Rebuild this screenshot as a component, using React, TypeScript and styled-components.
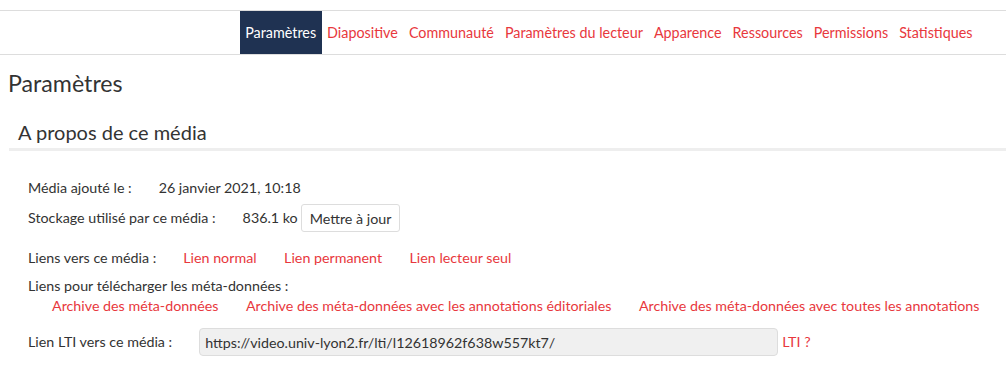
import React from "react";
import styled, { createGlobalStyle } from "styled-components";

const Global = createGlobalStyle`
  html, body { margin: 0; padding: 0; background: #fff; }
  body {
    font-family: Lato, "Open Sans", Arial, sans-serif;
    font-size: 14.27px;
    color: #333;
    width: 1006px;
    overflow: hidden;
  }
`;

const RED = "#e8383d";

const Header = styled.header`
  margin-top: 10px;
  border-top: 1px solid #ddd;
  border-bottom: 1px solid #ddd;
  display: flex;
  justify-content: flex-end;
  padding-right: 28px;
`;

const NavItem = styled.a<{ $active?: boolean }>`
  display: flex;
  align-items: center;
  height: 43px;
  padding: 0 5.5px;
  font-size: 14.35px;
  text-decoration: none;
  cursor: pointer;
  color: ${(p) => (p.$active ? "#fff" : RED)};
  background: ${(p) => (p.$active ? "#1f3252" : "transparent")};
`;

const Page = styled.main`
  padding: 0 0 0 8px;
`;

const Title = styled.h1`
  margin: 15px 0 0 0;
  font-size: 23.2px;
  line-height: 27px;
  font-weight: 400;
`;

const SectionTitle = styled.h2`
  margin: 23px 0 0 1px;
  padding: 0 0 4px 9px;
  font-size: 20px;
  line-height: 24px;
  font-weight: 400;
  border-bottom: 3px solid #eee;
`;

const Body = styled.div`
  padding-left: 20px;
  display: flex;
  flex-direction: column;
`;

const Row = styled.div<{ $top: number }>`
  display: flex;
  align-items: center;
  min-height: 20px;
  line-height: 20px;
  margin-top: ${(p) => p.$top}px;
`;

const Label = styled.span`
  margin-right: 27px;
`;

const Value = styled.span``;

const Button = styled.button`
  margin-left: 3px;
  height: 28px;
  padding: 0 8px;
  font-family: inherit;
  font-size: 14.27px;
  color: #333;
  background: #fff;
  border: 1px solid #ddd;
  border-radius: 3px;
`;

const Link = styled.a`
  color: ${RED};
  text-decoration: none;
  cursor: pointer;
  & + & {
    margin-left: 27.5px;
  }
`;

const Indented = styled.div`
  padding-left: 24px;
  display: flex;
  line-height: 20px;
`;

const Input = styled.input`
  width: 579px;
  height: 28px;
  box-sizing: border-box;
  padding: 0 5px;
  font-family: inherit;
  font-size: 14.27px;
  color: #333;
  background: #f0f0f0;
  border: 1px solid #ddd;
  border-radius: 4px;
  outline: none;
`;

const Help = styled.a`
  margin-left: 4px;
  color: ${RED};
  text-decoration: none;
`;

const navItems = [
  "Paramètres",
  "Diapositive",
  "Communauté",
  "Paramètres du lecteur",
  "Apparence",
  "Ressources",
  "Permissions",
  "Statistiques",
];

export default function App() {
  return (
    <>
      <Global />
      <Header>
        {navItems.map((n, i) => (
          <NavItem key={n} $active={i === 0}>
            {n}
          </NavItem>
        ))}
      </Header>
      <Page>
        <Title>Paramètres</Title>
        <SectionTitle>A propos de ce média</SectionTitle>
        <Body>
          <Row $top={27}>
            <Label>Média ajouté le :</Label>
            <Value>26 janvier 2021, 10:18</Value>
          </Row>
          <Row $top={6}>
            <Label>Stockage utilisé par ce média :</Label>
            <Value>836.1 ko</Value>
            <Button>Mettre à jour</Button>
          </Row>
          <Row $top={16}>
            <Label>Liens vers ce média :</Label>
            <Link>Lien normal</Link>
            <Link>Lien permanent</Link>
            <Link>Lien lecteur seul</Link>
          </Row>
          <Row $top={8}>
            <Label>Liens pour télécharger les méta-données :</Label>
          </Row>
          <Indented>
            <Link>Archive des méta-données</Link>
            <Link>Archive des méta-données avec les annotations éditoriales</Link>
            <Link>Archive des méta-données avec toutes les annotations</Link>
          </Indented>
          <Row $top={12}>
            <Label>Lien LTI vers ce média :</Label>
            <Input readOnly value="https://video.univ-lyon2.fr/lti/l12618962f638w557kt7/" />
            <Help>LTI ?</Help>
          </Row>
        </Body>
      </Page>
    </>
  );
}
